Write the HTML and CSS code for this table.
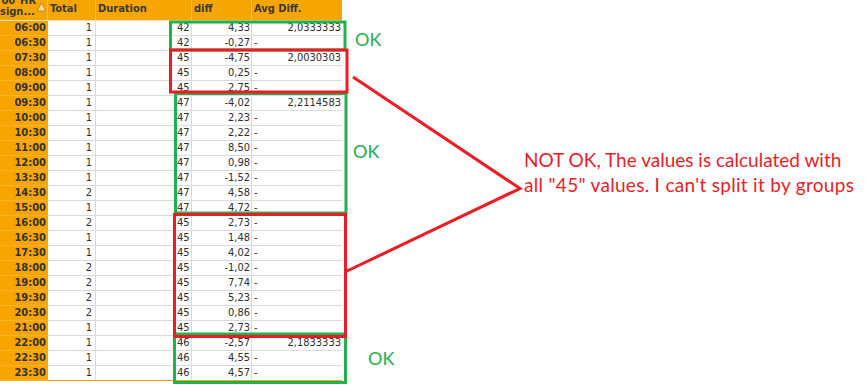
FILE: index.html
```html
<!DOCTYPE html>
<html>
<head>
<meta charset="utf-8">
<link rel="stylesheet" href="styles.css">
</head>
<body>
<div class="canvas">
  <div class="grid">
    <div class="hrow">
      <div class="hc hc-time">
        <span class="l1">00_HR</span>
        <span class="l2">sign...</span>
        <svg class="sort" width="11" height="10" viewBox="0 0 11 10"><polygon points="5.5,1 10,9 1,9" fill="#fcd79a" stroke="#c98a2a" stroke-width="1"/></svg>
      </div>
      <div class="hc">Total</div>
      <div class="hc hc-dur">Duration</div>
      <div class="hc">diff</div>
      <div class="hc">Avg Diff.</div>
    </div>
    <div class="row"><div class="c time">06:00</div><div class="c num">1</div><div class="c dur"></div><div class="c grp">42</div><div class="c diff">4,33</div><div class="c avg">2,0333333</div></div>
    <div class="row"><div class="c time">06:30</div><div class="c num">1</div><div class="c dur"></div><div class="c grp">42</div><div class="c diff">-0,27</div><div class="c avg dash">-</div></div>
    <div class="row"><div class="c time">07:30</div><div class="c num">1</div><div class="c dur"></div><div class="c grp">45</div><div class="c diff">-4,75</div><div class="c avg">2,0030303</div></div>
    <div class="row"><div class="c time">08:00</div><div class="c num">1</div><div class="c dur"></div><div class="c grp">45</div><div class="c diff">0,25</div><div class="c avg dash">-</div></div>
    <div class="row"><div class="c time">09:00</div><div class="c num">1</div><div class="c dur"></div><div class="c grp">45</div><div class="c diff">2,75</div><div class="c avg dash">-</div></div>
    <div class="row"><div class="c time">09:30</div><div class="c num">1</div><div class="c dur"></div><div class="c grp">47</div><div class="c diff">-4,02</div><div class="c avg">2,2114583</div></div>
    <div class="row"><div class="c time">10:00</div><div class="c num">1</div><div class="c dur"></div><div class="c grp">47</div><div class="c diff">2,23</div><div class="c avg dash">-</div></div>
    <div class="row"><div class="c time">10:30</div><div class="c num">1</div><div class="c dur"></div><div class="c grp">47</div><div class="c diff">2,22</div><div class="c avg dash">-</div></div>
    <div class="row"><div class="c time">11:00</div><div class="c num">1</div><div class="c dur"></div><div class="c grp">47</div><div class="c diff">8,50</div><div class="c avg dash">-</div></div>
    <div class="row"><div class="c time">12:00</div><div class="c num">1</div><div class="c dur"></div><div class="c grp">47</div><div class="c diff">0,98</div><div class="c avg dash">-</div></div>
    <div class="row"><div class="c time">13:30</div><div class="c num">1</div><div class="c dur"></div><div class="c grp">47</div><div class="c diff">-1,52</div><div class="c avg dash">-</div></div>
    <div class="row"><div class="c time">14:30</div><div class="c num">2</div><div class="c dur"></div><div class="c grp">47</div><div class="c diff">4,58</div><div class="c avg dash">-</div></div>
    <div class="row"><div class="c time">15:00</div><div class="c num">1</div><div class="c dur"></div><div class="c grp">47</div><div class="c diff">4,72</div><div class="c avg dash">-</div></div>
    <div class="row"><div class="c time">16:00</div><div class="c num">2</div><div class="c dur"></div><div class="c grp">45</div><div class="c diff">2,73</div><div class="c avg dash">-</div></div>
    <div class="row"><div class="c time">16:30</div><div class="c num">1</div><div class="c dur"></div><div class="c grp">45</div><div class="c diff">1,48</div><div class="c avg dash">-</div></div>
    <div class="row"><div class="c time">17:30</div><div class="c num">1</div><div class="c dur"></div><div class="c grp">45</div><div class="c diff">4,02</div><div class="c avg dash">-</div></div>
    <div class="row"><div class="c time">18:00</div><div class="c num">2</div><div class="c dur"></div><div class="c grp">45</div><div class="c diff">-1,02</div><div class="c avg dash">-</div></div>
    <div class="row"><div class="c time">19:00</div><div class="c num">2</div><div class="c dur"></div><div class="c grp">45</div><div class="c diff">7,74</div><div class="c avg dash">-</div></div>
    <div class="row"><div class="c time">19:30</div><div class="c num">2</div><div class="c dur"></div><div class="c grp">45</div><div class="c diff">5,23</div><div class="c avg dash">-</div></div>
    <div class="row"><div class="c time">20:30</div><div class="c num">2</div><div class="c dur"></div><div class="c grp">45</div><div class="c diff">0,86</div><div class="c avg dash">-</div></div>
    <div class="row"><div class="c time">21:00</div><div class="c num">1</div><div class="c dur"></div><div class="c grp">45</div><div class="c diff">2,73</div><div class="c avg dash">-</div></div>
    <div class="row"><div class="c time">22:00</div><div class="c num">1</div><div class="c dur"></div><div class="c grp">46</div><div class="c diff">-2,57</div><div class="c avg">2,1833333</div></div>
    <div class="row"><div class="c time">22:30</div><div class="c num">1</div><div class="c dur"></div><div class="c grp">46</div><div class="c diff">4,55</div><div class="c avg dash">-</div></div>
    <div class="row row-last"><div class="c time">23:30</div><div class="c num">1</div><div class="c dur"></div><div class="c grp">46</div><div class="c diff">4,57</div><div class="c avg dash">-</div></div>
  </div>

  <svg class="marks" width="865" height="390" viewBox="0 0 865 390">
    <g fill="none" stroke-width="3">
      <rect x="170.5" y="22" width="174.5" height="28" stroke="#22b14c"/>
      <rect x="175.5" y="93.5" width="170.5" height="119.5" stroke="#22b14c"/>
      <rect x="174.5" y="334" width="171" height="48.5" stroke="#22b14c"/>
      <rect x="170.5" y="50" width="176.5" height="42" stroke="#ed1c24"/>
      <rect x="174.5" y="214.5" width="171" height="122" stroke="#ed1c24"/>
      <polyline points="353,77 520,188.5 346,271.5" stroke="#ed1c24" stroke-linejoin="miter"/>
    </g>
  </svg>

  <div class="ok ok1">OK</div>
  <div class="ok ok2">OK</div>
  <div class="ok ok3">OK</div>
  <p class="note">NOT OK, The values is calculated with<br><span class="note-l2">all "45" values. I can't split it by groups</span></p>
</div>
</body>
</html>
```

FILE: styles.css
```css
* { box-sizing: border-box; }

html, body {
  margin: 0;
  padding: 0;
  background: #ffffff;
}

.canvas {
  position: relative;
  width: 865px;
  height: 390px;
  overflow: hidden;
}

.grid {
  display: flex;
  flex-direction: column;
  width: 342px;
  font-family: "DejaVu Sans Condensed", "DejaVu Sans", sans-serif;
  font-stretch: condensed;
  font-size: 11px;
  color: #2e2e2e;
}

.hrow {
  display: grid;
  grid-template-columns: 48px 48px 96px 60px 90px;
  height: 21px;
  border-bottom: 1px solid #fbe2b4;
  background: #f7a500;
  overflow: hidden;
}

.hc {
  font-weight: bold;
  line-height: 13px;
  padding: 2px 0 0 2px;
  border-right: 1px solid #f9c15c;
  color: #3a3a3a;
  white-space: nowrap;
  overflow: hidden;
}

.hc:last-child { border-right: none; }

.hc-time {
  position: relative;
  padding: 0;
  overflow: visible;
}

.hc-time .l1,
.hc-time .l2 {
  display: block;
  height: 11px;
  line-height: 11px;
  text-align: right;
  overflow: hidden;
}

.hc-time .l1 { padding-right: 11px; margin-top: -5px; }
.hc-time .l2 { padding-right: 15px; }

.sort {
  position: absolute;
  top: 2px;
  left: 36px;
}

.row {
  display: grid;
  grid-template-columns: 48px 48px 73px 23px 60px 90px;
  height: 15px;
  border-bottom: 1px solid #dadada;
}

.row-last { border-bottom-color: #f0a21a; }

.c {
  line-height: 14px;
  white-space: nowrap;
  overflow: hidden;
}

.time {
  background: #f7a500;
  font-weight: bold;
  text-align: right;
  padding-right: 2px;
  color: #333333;
  box-shadow: 0 1px 0 #f8b22e;
}

.num {
  text-align: right;
  padding-right: 3px;
  border-right: 1px solid #dadada;
}

.grp {
  padding-left: 8px;
  border-right: 1px solid #dadada;
}

.diff {
  text-align: right;
  padding-right: 1px;
  border-right: 1px solid #dadada;
}

.avg {
  text-align: right;
  padding-right: 1px;
}

.avg.dash {
  text-align: left;
  padding-left: 2px;
}

.marks {
  position: absolute;
  left: 0;
  top: 0;
  pointer-events: none;
}

.ok {
  position: absolute;
  font-family: Lato, "Open Sans", sans-serif;
  font-size: 18px;
  line-height: 18px;
  color: #22b14c;
}

.ok1 { left: 355px; top: 30px; }
.ok2 { left: 353px; top: 142px; }
.ok3 { left: 368px; top: 349px; }

.note {
  position: absolute;
  left: 524px;
  top: 147px;
  margin: 0;
  font-family: Lato, "Open Sans", sans-serif;
  font-size: 19px;
  line-height: 25px;
  color: #ed1c24;
  white-space: nowrap;
}

.note-l2 { letter-spacing: 0.3px; }
```
